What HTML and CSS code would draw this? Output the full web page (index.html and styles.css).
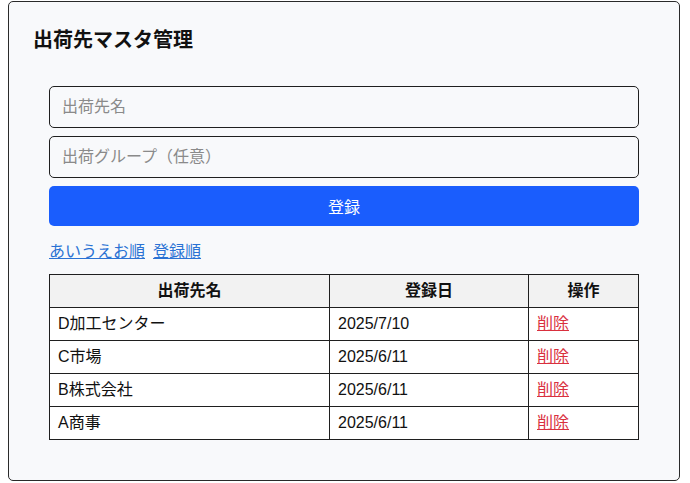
FILE: index.html
```html
<!DOCTYPE html>
<html lang="ja">
<head>
<meta charset="utf-8">
<title>出荷先マスタ管理</title>
<link rel="stylesheet" href="styles.css">
</head>
<body>
<main class="card">
  <h1 class="title">出荷先マスタ管理</h1>
  <section class="panel">
    <form class="form">
      <input class="field" type="text" placeholder="出荷先名">
      <input class="field" type="text" placeholder="出荷グループ（任意）">
      <button class="submit" type="button">登録</button>
    </form>
    <nav class="sorts">
      <a class="sort-link" href="#">あいうえお順</a>
      <a class="sort-link" href="#">登録順</a>
    </nav>
    <table class="list">
      <colgroup>
        <col class="col-name">
        <col class="col-date">
        <col class="col-op">
      </colgroup>
      <thead>
        <tr><th>出荷先名</th><th>登録日</th><th>操作</th></tr>
      </thead>
      <tbody>
        <tr><td>D加工センター</td><td>2025/7/10</td><td><a class="del" href="#">削除</a></td></tr>
        <tr><td>C市場</td><td>2025/6/11</td><td><a class="del" href="#">削除</a></td></tr>
        <tr><td>B株式会社</td><td>2025/6/11</td><td><a class="del" href="#">削除</a></td></tr>
        <tr><td>A商事</td><td>2025/6/11</td><td><a class="del" href="#">削除</a></td></tr>
      </tbody>
    </table>
  </section>
</main>
</body>
</html>
```

FILE: styles.css
```css
html, body {
  margin: 0;
  background: #ffffff;
}
body {
  padding: 1px 10px 0 8px;
  font-family: "Liberation Sans", "Noto Sans CJK JP", sans-serif;
  font-size: 16px;
  color: #111;
}
.card {
  box-sizing: border-box;
  width: 672px;
  border: 1px solid #2a2a2a;
  border-radius: 5px;
  background: #f8f9fb;
  padding: 24px 24px 24px 24px;
}
.title {
  margin: 0 0 32px;
  font-size: 20px;
  line-height: 28px;
  font-weight: 700;
  color: #111;
}
.panel {
  margin: 0 16px 16px;
}
.form {
  display: flex;
  flex-direction: column;
  gap: 8px;
  margin: 0;
}
.field {
  box-sizing: border-box;
  height: 42px;
  border: 1px solid #1f1f1f;
  border-radius: 5px;
  background: #f8f9fb;
  padding: 0 12px;
  font-family: inherit;
  font-size: 16px;
  color: #111;
}
.field::placeholder {
  color: #8a8a8a;
}
.submit {
  height: 40px;
  border: none;
  border-radius: 5px;
  background: #1a5dfd;
  color: #fff;
  font-family: inherit;
  font-size: 16px;
}
.sorts {
  display: flex;
  gap: 8px;
  margin: 14px 0 10px;
  line-height: 24px;
}
.sort-link {
  color: #2a72d4;
  text-decoration: underline;
}
.list {
  width: 100%;
  border-collapse: collapse;
  background: #ffffff;
}
.col-name { width: 280px; }
.col-date { width: 199px; }
.list th,
.list td {
  border: 1px solid #1f1f1f;
  padding: 4px 8px;
  line-height: 24px;
  font-size: 16px;
}
.list th {
  background: #f2f2f2;
  font-weight: 700;
  text-align: center;
}
.list td {
  text-align: left;
}
.del {
  color: #d9303e;
  text-decoration: underline;
}
```
